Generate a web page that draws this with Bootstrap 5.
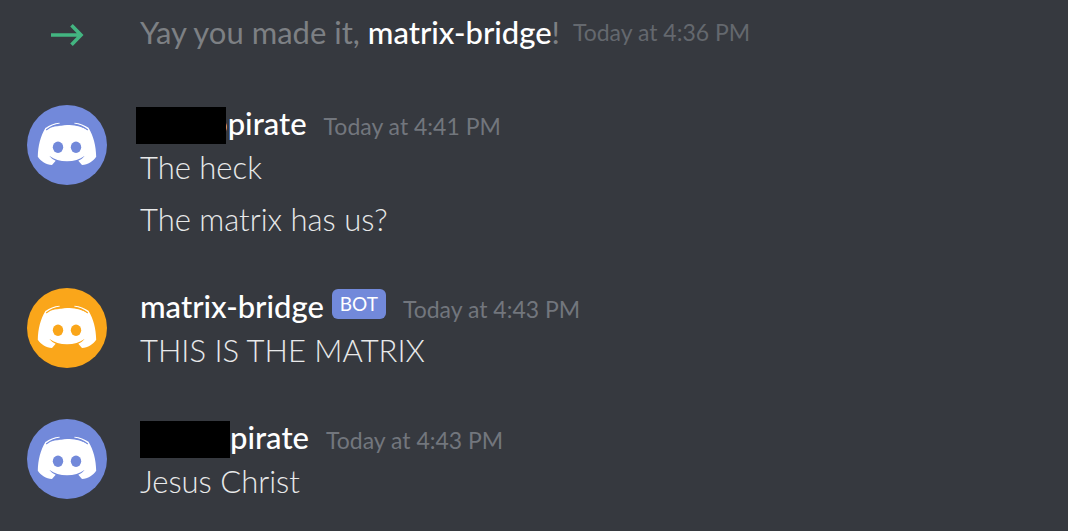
<!DOCTYPE html>
<html lang="en">
<head>
<meta charset="utf-8">
<meta name="viewport" content="width=device-width, initial-scale=1">
<title>Chat</title>
<link href="https://cdn.jsdelivr.net/npm/bootstrap@5.3.0/dist/css/bootstrap.min.css" rel="stylesheet">
<style>
  body { background: #36393f; color: #e8e9ea; font-family: Lato, "Noto Sans", sans-serif; font-size: 31px; font-weight: 400; line-height: 44px; }
  .chat { padding: 10px 27px 18px; }
  .entry { gap: 33px; margin-bottom: 43px; }
  .entry.joined { margin-bottom: 47px; color: #7d8084; }
  .gutter { width: 80px; }
  .avatar { width: 80px; height: 80px; margin-top: 4px; color: #7289da; }
  .avatar.orange { color: #faa61a; }
  .author { color: #fff; font-weight: 500; }
  .stamp { color: #72767d; font-size: 23px; line-height: 28px; margin-left: 17px; }
  .joined .stamp { color: #64686e; margin-left: 13px; }
  .bot { background: #7289da; color: #fff; font-size: 19px; line-height: 30px; border-radius: 6px; padding: 0 8px; margin-left: 8px; margin-bottom: 4px; }
  .redacted { width: 90px; height: 37px; background: #000; margin-top: 5px; position: relative; }
  .redacted.overlap { margin-left: -4px; margin-right: -16px; }
  .text { font-weight: 300; }
  .text + .text { margin-top: 8px; }
</style>
</head>
<body>
<svg class="d-none" aria-hidden="true">
  <symbol id="mascot" viewBox="0 0 80 80">
    <circle cx="40" cy="40" r="40" fill="currentColor"/>
    <path fill="#fff" d="M40 20 C33 20 27 21 20 24.500 L18.500 23 C22.500 20 27 18.200 32.500 17.700 L33 18.700 C27 20 23 22 19.500 24.700 C27 21 33 20 40 20 C47 20 53 21 60.500 24.700 C57 22 53 20 47 18.700 L47.500 17.700 C53 18.200 57.500 20 61.500 22.700 C66.500 31 69 41 69.200 51.700 C66 56.500 61 59.500 55 60 L51.300 55.800 C54 54.500 56 53 57.700 50.700 C52.500 54.500 47 56.300 40 56.300 C33 56.300 27.500 54.500 22.300 50.700 C24 53 26 54.500 28.700 55.800 L25 60 C19 59.500 14 56.500 10.800 51.700 C11 41 13.500 31 18.500 22.700 Z"/>
    <path fill="none" stroke="currentColor" stroke-width="1.200" stroke-linecap="round" d="M19.500 24.700 C24 21.500 28 19.800 33 19.200 M60.500 24.700 C56 21.500 52 19.800 47 19.200"/>
    <ellipse cx="31" cy="42.300" rx="5.200" ry="5.700" fill="currentColor"/>
    <ellipse cx="49" cy="42.300" rx="5.200" ry="5.700" fill="currentColor"/>
  </symbol>
</svg>
<main class="chat">
  <div class="entry joined d-flex">
    <div class="gutter flex-shrink-0 d-flex justify-content-center align-items-center">
      <svg width="34" height="34" viewBox="0 0 34 34" fill="none" stroke="#43b581" stroke-width="3.600" aria-hidden="true"><path d="M1 20H31M21.500 10.200L31 20L21.500 29.800"/></svg>
    </div>
    <div class="d-flex flex-wrap align-items-center">
      <div>Yay you made it, <span class="author">matrix-bridge</span>!</div>
      <time class="stamp">Today at 4:36 PM</time>
    </div>
  </div>

  <article class="entry d-flex">
    <svg class="avatar flex-shrink-0" role="img" aria-label="Avatar"><use href="#mascot"/></svg>
    <div>
      <header class="d-flex align-items-baseline">
        <span class="redacted overlap align-self-center"></span><span class="author">opirate</span>
        <time class="stamp">Today at 4:41 PM</time>
      </header>
      <div class="text">The heck</div>
      <div class="text">The matrix has us?</div>
    </div>
  </article>

  <article class="entry d-flex">
    <svg class="avatar orange flex-shrink-0" role="img" aria-label="Avatar"><use href="#mascot"/></svg>
    <div>
      <header class="d-flex align-items-baseline">
        <span class="author">matrix-bridge</span>
        <span class="bot align-self-center">BOT</span>
        <time class="stamp">Today at 4:43 PM</time>
      </header>
      <div class="text">THIS IS THE MATRIX</div>
    </div>
  </article>

  <article class="entry d-flex mb-0">
    <svg class="avatar flex-shrink-0" role="img" aria-label="Avatar"><use href="#mascot"/></svg>
    <div>
      <header class="d-flex align-items-baseline">
        <span class="redacted align-self-center"></span><span class="author">pirate</span>
        <time class="stamp">Today at 4:43 PM</time>
      </header>
      <div class="text">Jesus Christ</div>
    </div>
  </article>
</main>
<script src="https://cdn.jsdelivr.net/npm/bootstrap@5.3.0/dist/js/bootstrap.bundle.min.js"></script>
</body>
</html>
